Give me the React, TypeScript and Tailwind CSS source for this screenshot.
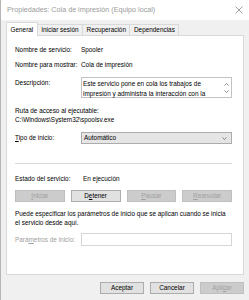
import React from "react";

const TABS = ["General", "Iniciar sesión", "Recuperación", "Dependencias"];

function Btn({
  children,
  disabled,
  className = "",
}: {
  children: React.ReactNode;
  disabled?: boolean;
  className?: string;
}) {
  return (
    <div
      className={
        "flex h-[12px] items-center justify-center border text-[6.4px] leading-none " +
        (disabled
          ? "border-[#bfbfbf] bg-[#cccccc] text-[#a0a0a0] "
          : "border-[#adadad] bg-[#e1e1e1] text-black ") +
        className
      }
    >
      {children}
    </div>
  );
}

function Row({ label, value }: { label: string; value: string }) {
  return (
    <div className="flex h-[10px] items-center">
      <span className="w-[66px] shrink-0">{label}</span>
      <span>{value}</span>
    </div>
  );
}

export default function App() {
  return (
    <div
      className="flex h-[300px] w-[249px] flex-col overflow-hidden border-l border-[#b5b5b5] bg-[#f0f0f0] text-black"
      style={{ fontFamily: '"Liberation Sans", Arial, sans-serif' }}
    >
      {/* title bar */}
      <div className="flex h-[20px] shrink-0 items-center justify-between bg-white pl-[6px] pr-[5px]">
        <span className="text-[7.2px] text-[#9b9b9b] whitespace-nowrap">
          Propiedades: Cola de impresión (Equipo local)
        </span>
        <svg width="8" height="8" viewBox="0 0 8 8" className="mr-[1px]">
          <path d="M0.5 0.5L7.5 7.5M7.5 0.5L0.5 7.5" stroke="#8a8a8a" strokeWidth="0.8" />
        </svg>
      </div>

      {/* tabs */}
      <div className="flex h-[15px] shrink-0 items-end pl-[5px]">
        {TABS.map((t, i) =>
          i === 0 ? (
            <div
              key={t}
              className="relative -mb-[1px] flex h-[14px] items-center border border-b-0 border-[#d9d9d9] bg-white px-[3.5px] text-[6.4px] z-10"
            >
              {t}
            </div>
          ) : (
            <div
              key={t}
              className="flex h-[11px] items-center border border-l-0 border-b-0 border-[#d9d9d9] bg-[#f0f0f0] px-[3.5px] text-[6.4px]"
            >
              {t}
            </div>
          ),
        )}
      </div>

      {/* panel */}
      <div className="mx-[5px] flex h-[240px] shrink-0 flex-col border border-[#d9d9d9] bg-white pl-[8px] pr-[11px] text-[6.4px] whitespace-nowrap">
        <div className="mt-[9px]">
          <Row label="Nombre de servicio:" value="Spooler" />
        </div>
        <div className="mt-[5px]">
          <Row label="Nombre para mostrar:" value="Cola de impresión" />
        </div>

        <div className="mt-[7px] flex">
          <span className="mt-[1px] flex h-[10px] w-[66px] shrink-0 items-center">Descripción:</span>
          <div className="flex h-[21px] flex-1 border border-[#c3c3c3] pl-[1px]">
            <div className="flex-1 pt-[1px] leading-[9.5px]">
              <div>Este servicio pone en cola los trabajos de</div>
              <div>impresión y administra la interacción con la</div>
            </div>
            <div className="flex w-[9px] flex-col items-center justify-center gap-[4px]">
              <svg width="5" height="3" viewBox="0 0 5 3">
                <path d="M0.5 2.5L2.5 0.5L4.5 2.5" stroke="#606060" strokeWidth="0.7" fill="none" />
              </svg>
              <svg width="5" height="3" viewBox="0 0 5 3">
                <path d="M0.5 0.5L2.5 2.5L4.5 0.5" stroke="#606060" strokeWidth="0.7" fill="none" />
              </svg>
            </div>
          </div>
        </div>

        <div className="mt-[8px] flex h-[9px] items-center">Ruta de acceso al ejecutable:</div>
        <div className="flex h-[9px] items-center">C:\Windows\System32\spoolsv.exe</div>

        <div className="mt-[8px] flex items-center">
          <span className="w-[66px] shrink-0">
            <span className="underline">T</span>ipo de inicio:
          </span>
          <div className="flex h-[12px] flex-1 items-center justify-between border border-[#acacac] bg-[#e5e5e5] pl-[2px] pr-[4px]">
            <span>Automático</span>
            <svg width="5" height="3" viewBox="0 0 5 3">
              <path d="M0.5 0.5L2.5 2.5L4.5 0.5" stroke="#606060" strokeWidth="0.7" fill="none" />
            </svg>
          </div>
        </div>

        <div className="mt-[19px] h-[1px] bg-[#dadada]" />

        <div className="mt-[10px] flex h-[10px] items-center">
          <span className="w-[68px] shrink-0">Estado del servicio:</span>
          <span>En ejecución</span>
        </div>

        <div className="mt-[6px] flex gap-[6px]">
          <Btn disabled className="flex-1">
            <span className="underline">I</span>niciar
          </Btn>
          <Btn className="flex-1">
            D<span className="underline">e</span>tener
          </Btn>
          <Btn disabled className="flex-1">
            <span className="underline">P</span>ausar
          </Btn>
          <Btn disabled className="flex-1">
            <span className="underline">R</span>eanudar
          </Btn>
        </div>

        <div className="mt-[7px] leading-[9px]">
          <div>Puede especificar los parámetros de inicio que se aplican cuando se inicia</div>
          <div>el servicio desde aquí.</div>
        </div>

        <div className="mt-[6px] flex items-center">
          <span className="w-[66px] shrink-0 text-[#a0a0a0]">
            Pará<span className="underline">m</span>etros de inicio:
          </span>
          <div className="h-[13px] flex-1 border border-[#d6d6d6] bg-white" />
        </div>
      </div>

      {/* dialog buttons */}
      <div className="mt-[7px] flex justify-end gap-[6px] pr-[5px]">
        <Btn className="w-[44px]">Aceptar</Btn>
        <Btn className="w-[44px]">Cancelar</Btn>
        <Btn disabled className="w-[44px]">
          Apli<span className="underline">c</span>ar
        </Btn>
      </div>
    </div>
  );
}
